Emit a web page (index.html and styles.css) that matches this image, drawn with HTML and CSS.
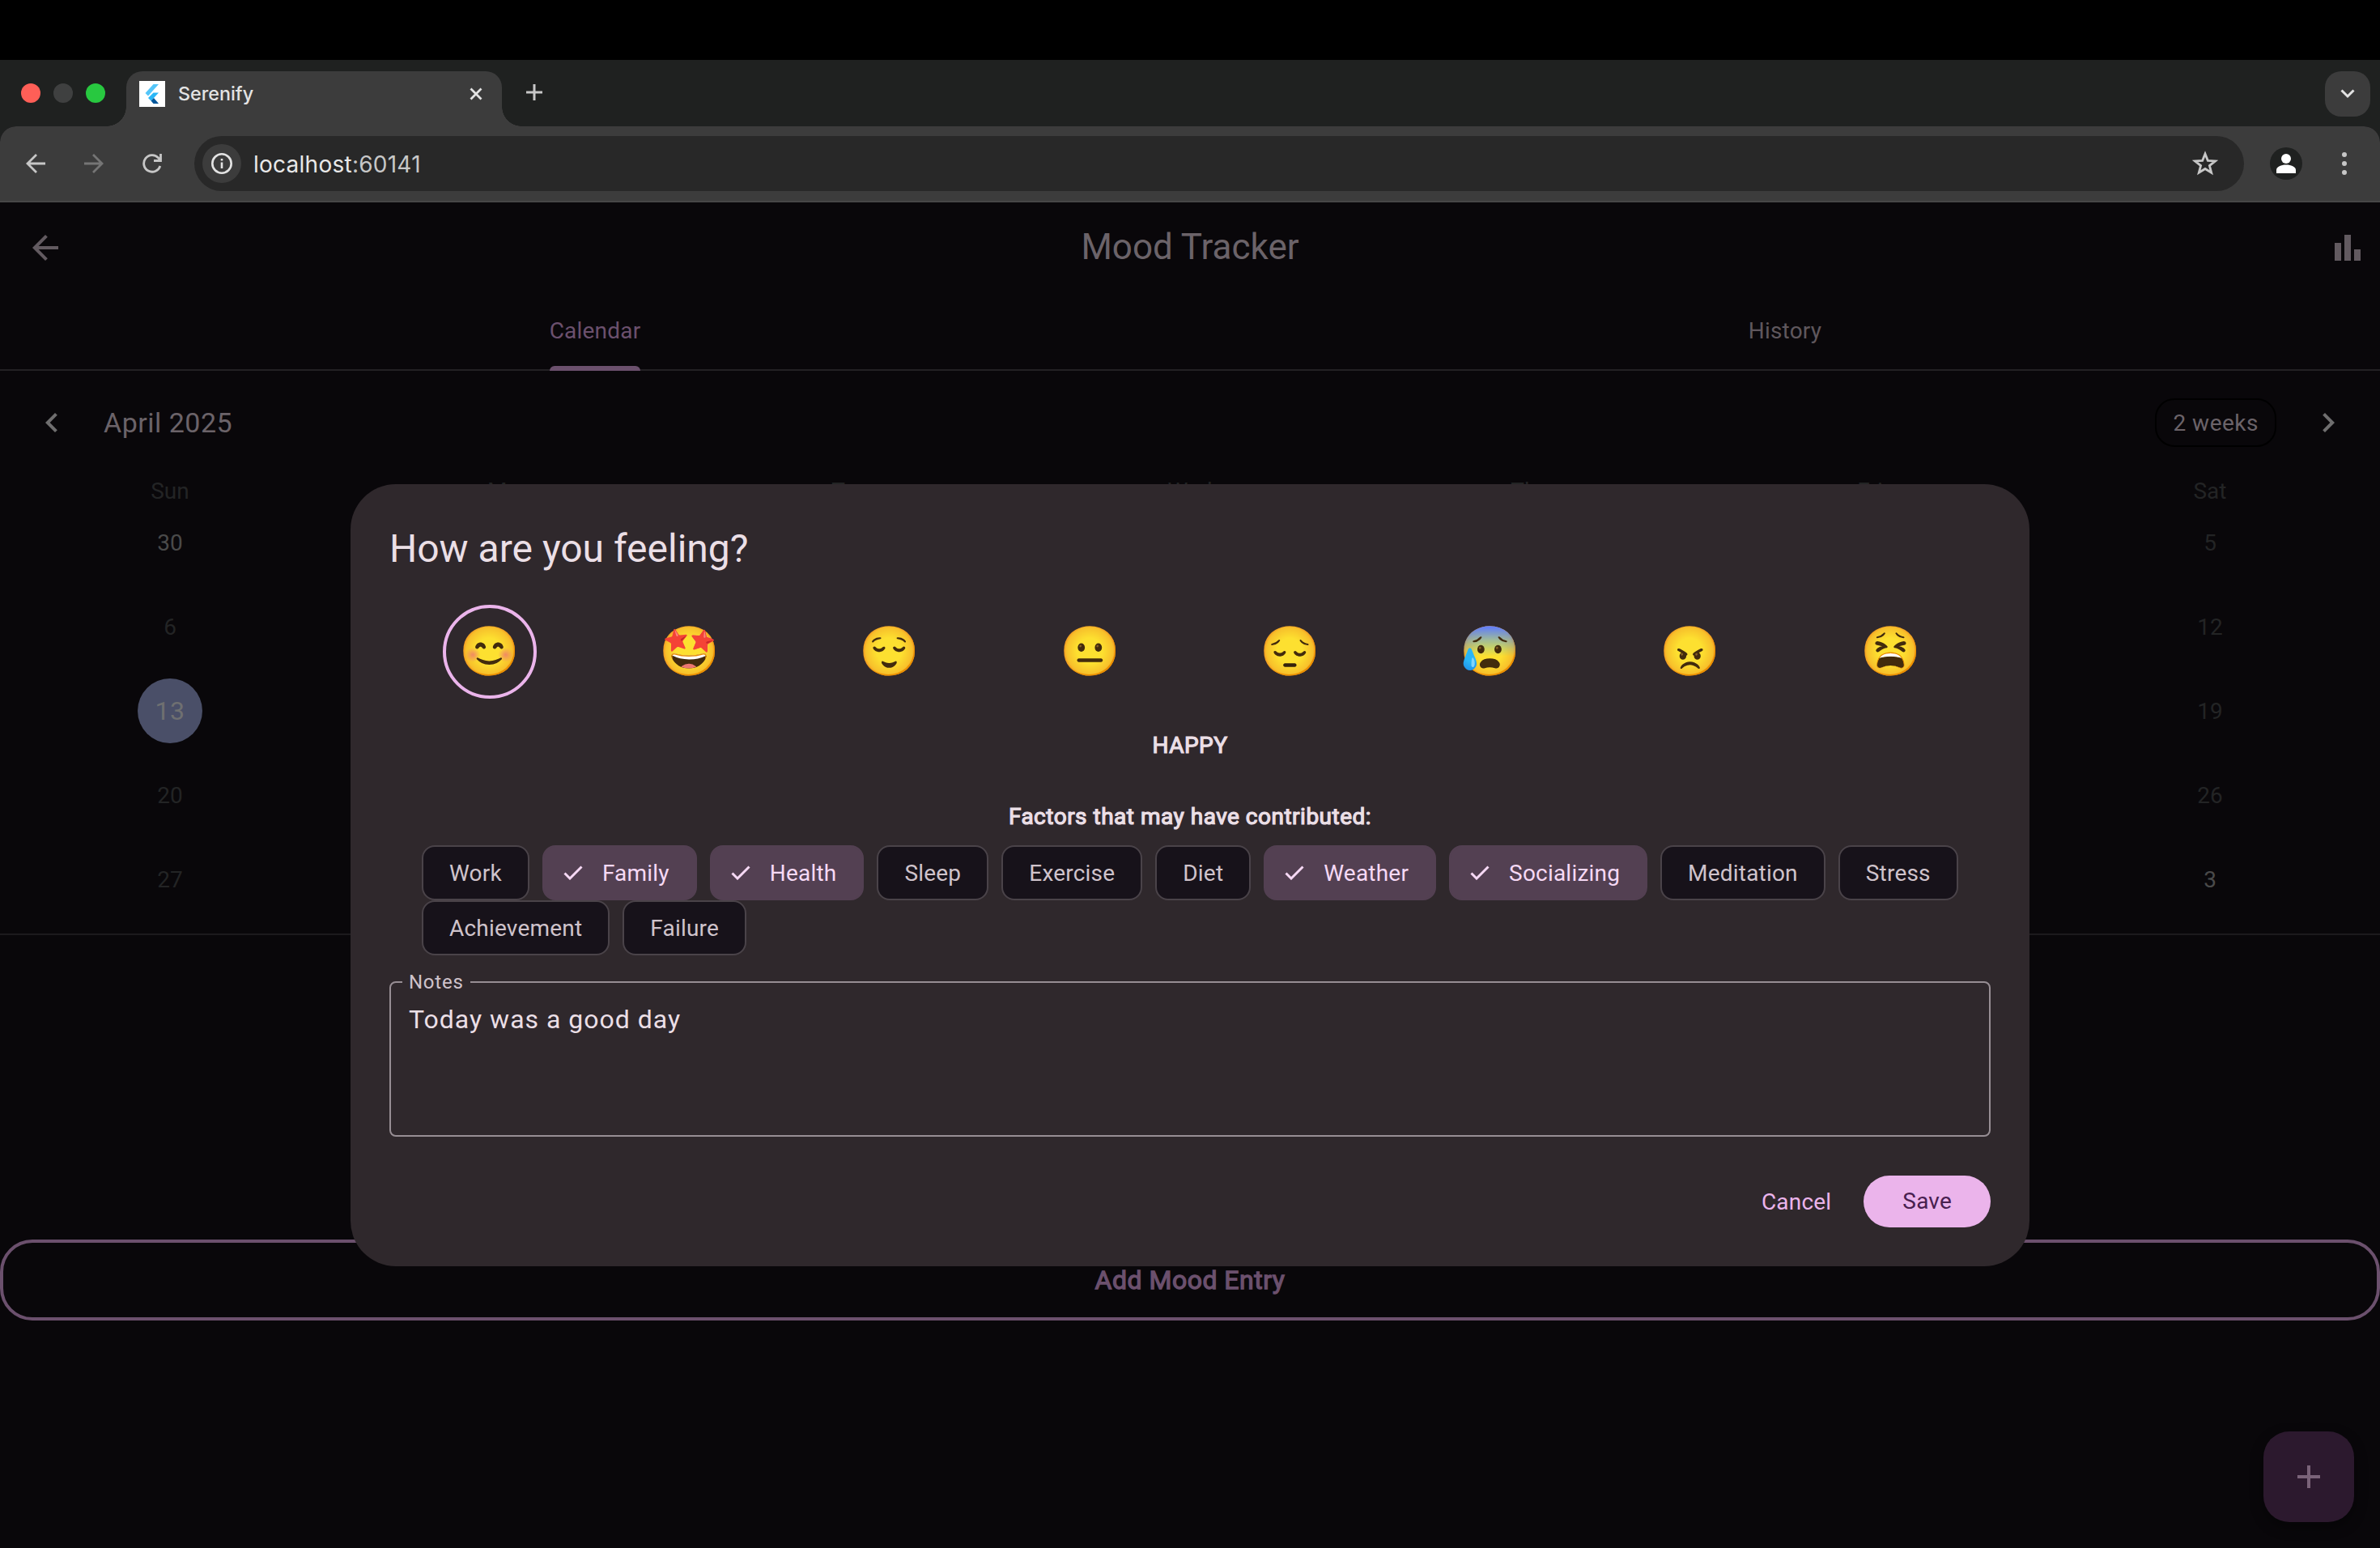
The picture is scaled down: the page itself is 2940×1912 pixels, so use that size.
FILE: index.html
```html
<!DOCTYPE html>
<html lang="en">
<head>
<meta charset="utf-8">
<title>Serenify</title>
<link rel="stylesheet" href="styles.css">
</head>
<body>
<div class="screen">
  <div class="menubar"></div>

  <div class="tabstrip">
    <div class="lights"><span class="light red"></span><span class="light gray"></span><span class="light green"></span></div>
    <div class="browser-tab">
      <svg class="favicon" viewBox="0 0 32 32"><rect width="32" height="32" fill="#fff"/><path d="M17.500 4h6.500L11 18.500 7.500 15z" fill="#54c5f8"/><path d="M17.500 14.500H24L18 21l-3.500 3.500L11 21z" fill="#29b6f6"/><path d="M14.500 24.500L18 21l6 7h-6.500z" fill="#01579b"/></svg>
      <span class="tab-name">Serenify</span>
      <svg class="tab-close" viewBox="0 0 16 16"><path d="M1.500 1.500l13 13M14.500 1.500l-13 13"/></svg>
    </div>
    <svg class="new-tab" viewBox="0 0 20 20"><path d="M10 0v20M0 10h20"/></svg>
    <div class="tab-search"><svg viewBox="0 0 18 12"><path d="M1.500 1.500L9 9l7.500-7.500"/></svg></div>
  </div>

  <div class="toolbar">
    <svg class="nav-icon" viewBox="0 0 24 24"><path d="M13 1L2 12l11 11M2 12h22"/></svg>
    <svg class="nav-icon dim" viewBox="0 0 24 24"><path d="M11 1l11 11-11 11M22 12H0"/></svg>
    <svg class="nav-icon" viewBox="0 0 24 24"><path d="M21.800 15A10.300 10.300 0 1 1 19.600 5L22 7.500M22.500 0v8.500H14"/></svg>
    <div class="address">
      <div class="site-info"><svg viewBox="0 0 26 26"><circle cx="13" cy="13" r="11.700"/><path d="M13 11.500v7.500M13 7v2.600"/></svg></div>
      <div class="url"><b>localhost</b>:60141</div>
      <svg class="star" viewBox="0 0 32 32"><path d="M16 4l3.300 8.300 9.200.6-7.100 5.700 2.300 8.700L16 22.500l-7.700 4.800 2.300-8.700-7.100-5.700 9.200-.6z"/></svg>
    </div>
    <svg class="profile" viewBox="0 0 40 40"><circle cx="20" cy="20" r="20" fill="#1f2120"/><circle cx="20" cy="14" r="6" fill="#fff"/><path d="M8 32v-4c0-4 6-6.500 12-6.500S32 24 32 28v4z" fill="#fff"/></svg>
    <svg class="kebab" viewBox="0 0 8 30"><circle cx="4" cy="4" r="3"/><circle cx="4" cy="15" r="3"/><circle cx="4" cy="26" r="3"/></svg>
  </div>

  <main class="app">
    <header class="appbar">
      <svg class="appbar-icon" viewBox="0 0 24 24"><path d="M20 11H7.830l5.590-5.590L12 4l-8 8 8 8 1.410-1.410L7.830 13H20z"/></svg>
      <h1>Mood Tracker</h1>
      <svg class="appbar-icon" viewBox="0 0 24 24"><path d="M4 9h4v11H4zM10 4h4v16h-4zM16 13h4v7h-4z"/></svg>
    </header>

    <nav class="tabs">
      <div class="tab"><span class="tab-label active">Calendar</span></div>
      <div class="tab"><span class="tab-label">History</span></div>
    </nav>

    <section class="calendar">
      <div class="cal-head">
        <svg class="chev" viewBox="0 0 24 24"><path d="M15.410 7.410L14 6l-6 6 6 6 1.410-1.410L10.830 12z"/></svg>
        <span class="month">April 2025</span>
        <span class="format">2 weeks</span>
        <svg class="chev" viewBox="0 0 24 24"><path d="M10 6L8.590 7.410 13.170 12l-4.580 4.590L10 18l6-6z"/></svg>
      </div>
      <div class="weekdays"><span>Sun</span><span>Mon</span><span>Tue</span><span>Wed</span><span>Thu</span><span>Fri</span><span>Sat</span></div>
      <div class="days">
        <span class="near">30</span><span></span><span></span><span></span><span></span><span></span><span>5</span>
        <span>6</span><span></span><span></span><span></span><span></span><span></span><span>12</span>
        <span><i class="today">13</i></span><span></span><span></span><span></span><span></span><span></span><span>19</span>
        <span>20</span><span></span><span></span><span></span><span></span><span></span><span>26</span>
        <span>27</span><span></span><span></span><span></span><span></span><span></span><span class="near">3</span>
      </div>
    </section>

    <button class="add-entry">Add Mood Entry</button>
  </main>

  <div class="fab"><svg viewBox="0 0 28 28"><path d="M14 0v28M0 14h28"/></svg></div>

  <div class="dialog">
    <h2>How are you feeling?</h2>
    <div class="moods">
      <div class="mood selected"><span>😊</span></div>
      <div class="mood"><span>🤩</span></div>
      <div class="mood"><span>😌</span></div>
      <div class="mood"><span>😐</span></div>
      <div class="mood"><span>😔</span></div>
      <div class="mood"><span>😰</span></div>
      <div class="mood"><span>😠</span></div>
      <div class="mood"><span>😫</span></div>
    </div>
    <div class="mood-name">HAPPY</div>
    <div class="factors-title">Factors that may have contributed:</div>
    <div class="chips">
      <span class="chip">Work</span>
      <span class="chip on"><svg viewBox="0 0 24 18"><path d="M1.500 9.500l6.500 6.500L22.500 1.500"/></svg>Family</span>
      <span class="chip on"><svg viewBox="0 0 24 18"><path d="M1.500 9.500l6.500 6.500L22.500 1.500"/></svg>Health</span>
      <span class="chip">Sleep</span>
      <span class="chip">Exercise</span>
      <span class="chip">Diet</span>
      <span class="chip on"><svg viewBox="0 0 24 18"><path d="M1.500 9.500l6.500 6.500L22.500 1.500"/></svg>Weather</span>
      <span class="chip on"><svg viewBox="0 0 24 18"><path d="M1.500 9.500l6.500 6.500L22.500 1.500"/></svg>Socializing</span>
      <span class="chip">Meditation</span>
      <span class="chip">Stress</span>
      <span class="chip">Achievement</span>
      <span class="chip">Failure</span>
    </div>
    <fieldset class="notes">
      <legend>Notes</legend>
      <div class="notes-text">Today was a good day</div>
    </fieldset>
    <div class="actions">
      <span class="cancel">Cancel</span>
      <span class="save">Save</span>
    </div>
  </div>
</div>
</body>
</html>
```
FILE: styles.css
```css
* { box-sizing: border-box; }
body { margin: 0; background: #09070a; }
.screen {
  position: relative;
  width: 2940px;
  height: 1912px;
  overflow: hidden;
  background: #09070a;
  font-family: Roboto, "Liberation Sans", sans-serif;
  font-size: 28px;
}
svg { display: block; flex: none; }

/* browser chrome */
.menubar { height: 74px; background: #000; }
.tabstrip {
  display: flex;
  align-items: center;
  height: 82px;
  padding: 0 12px 0 26px;
  background: #1f2120;
}
.lights { display: flex; gap: 16px; width: 130px; }
.light { width: 24px; height: 24px; border-radius: 50%; }
.red { background: #ff5f57; }
.gray { background: #3f4040; }
.green { background: #28c840; }
.browser-tab {
  position: relative;
  align-self: flex-end;
  display: flex;
  align-items: center;
  width: 464px;
  height: 68px;
  padding: 0 24px 12px 16px;
  border-radius: 20px 20px 0 0;
  background: #3c3c3c;
}
.browser-tab::before, .browser-tab::after {
  content: "";
  position: absolute;
  bottom: 0;
  width: 24px;
  height: 24px;
}
.browser-tab::before { left: -24px; background: radial-gradient(circle at 0 0, #1f2120 23.5px, #3c3c3c 24px); }
.browser-tab::after { right: -24px; background: radial-gradient(circle at 100% 0, #1f2120 23.5px, #3c3c3c 24px); }
.favicon { width: 32px; height: 32px; }
.tab-name { flex: 1; margin-left: 16px; font: 500 23.3px/32px Inter, sans-serif; color: #e3e3e3; }
.tab-close { width: 16px; height: 16px; stroke: #e3e3e3; stroke-width: 2.800; }
.new-tab { width: 20px; height: 20px; margin: 0 auto 2px 30px; stroke: #c7c7c7; stroke-width: 3; }
.tab-search {
  display: flex;
  align-items: center;
  justify-content: center;
  width: 56px;
  height: 56px;
  margin-top: 2px;
  border-radius: 20px;
  background: #3c3c3c;
}
.tab-search svg { width: 18px; height: 12px; fill: none; stroke: #e3e3e3; stroke-width: 3; }
.toolbar {
  display: flex;
  align-items: center;
  height: 94px;
  padding: 0 40px 0 32px;
  background: linear-gradient(#3c3c3c, #3c3c3c) padding-box;
  border-bottom: 2px solid #474747;
  border-radius: 20px 20px 0 0;
  box-shadow: 0 -20px 0 0 #1f2120;
  clip-path: inset(0);
}
.nav-icon { width: 24px; height: 24px; margin-right: 48px; fill: none; stroke: #c7c7c7; stroke-width: 2.800; }
.nav-icon.dim { stroke: #757575; }
.nav-icon:nth-child(3) { margin-right: 40px; }
.address {
  display: flex;
  align-items: center;
  width: 2532px;
  height: 68px;
  padding: 0 32px 0 10px;
  border-radius: 34px;
  background: #282828;
}
.site-info {
  display: flex;
  align-items: center;
  justify-content: center;
  width: 48px;
  height: 48px;
  border-radius: 50%;
  background: #3c3c3c;
}
.site-info svg { width: 26px; height: 26px; fill: none; stroke: #e3e3e3; stroke-width: 2.600; }
.url { flex: 1; margin: 1px 0 0 15px; font: 400 28px/36px Inter, sans-serif; letter-spacing: .25px; color: #c7c7c7; }
.url b { font-weight: 400; color: #e8e8e8; }
.star { width: 32px; height: 32px; fill: none; stroke: #c7c7c7; stroke-width: 2.800; }
.profile { width: 40px; height: 40px; margin-left: 32px; }
.kebab { width: 8px; height: 30px; margin-left: 48px; fill: #c7c7c7; }

/* app page */
.appbar {
  display: flex;
  align-items: center;
  justify-content: space-between;
  height: 112px;
  padding: 0 16px 0 32px;
}
.appbar-icon { width: 48px; height: 48px; fill: #625a60; }
h1 { margin: 0 0 2px -16px; font-size: 44px; font-weight: 400; line-height: 56px; color: #6b6369; }
.tabs { display: flex; height: 96px; border-bottom: 2px solid #232124; }
.tab { flex: 1; display: flex; justify-content: center; }
.tab-label {
  height: 96px;
  line-height: 93px;
  letter-spacing: .2px;
  color: #5f575d;
}
.tab-label.active { color: #6b506d; }
.tab-label.active::after {
  content: "";
  display: block;
  height: 6px;
  margin-top: -3px;
  border-radius: 6px 6px 0 0;
  background: #6b506d;
}
.cal-head {
  display: flex;
  align-items: center;
  height: 128px;
  padding: 0 40px;
}
.chev { width: 48px; height: 48px; fill: #6f6e6f; }
.month { flex: 1; margin-left: 40px; font-size: 34px; line-height: 40px; letter-spacing: .5px; color: #6b6369; }
.format {
  height: 60px;
  padding: 0 20px;
  margin-right: 40px;
  border: 2px solid #000;
  border-radius: 24px;
  line-height: 58px;
  letter-spacing: .5px;
  color: #6b6369;
}
.weekdays, .days { display: grid; grid-template-columns: repeat(7, 420px); text-align: center; color: #232425; }
.weekdays { height: 32px; margin-top: 5px; line-height: 32px; }
.days { grid-auto-rows: 104px; line-height: 104px; margin-top: -4px; height: 536px; border-bottom: 2px solid #1c1a1d; }
.days span { display: flex; align-items: center; justify-content: center; }
.days .near { color: #4a4a4a; }
.today {
  width: 80px;
  height: 80px;
  margin-top: -2px;
  border-radius: 50%;
  background: #4a4f68;
  font-size: 32px;
  font-style: normal;
  line-height: 80px;
  letter-spacing: .5px;
  color: #6f7071;
}
.add-entry {
  display: block;
  width: 2940px;
  height: 100px;
  margin-top: 376px;
  padding: 0;
  border: 4px solid #6b506d;
  border-radius: 40px;
  background: none;
  font: 400 32px/92px Roboto, sans-serif;
  letter-spacing: .5px;
  color: #6b506d;
  -webkit-text-stroke: 1.3px #6b506d;
}
.fab {
  position: absolute;
  left: 2796px;
  top: 1768px;
  display: flex;
  align-items: center;
  justify-content: center;
  width: 112px;
  height: 112px;
  border-radius: 32px;
  background: #2c192e;
  box-shadow: 0 6px 16px rgba(0, 0, 0, .4);
}
.fab svg { width: 28px; height: 28px; stroke: #7a6379; stroke-width: 4; }

/* mood dialog */
.dialog {
  position: absolute;
  left: 433px;
  top: 598px;
  width: 2074px;
  height: 966px;
  padding: 48px;
  border-radius: 56px;
  background: #2f282c;
  color: #ebdfe6;
}
h2 { margin: 0; font-size: 48px; font-weight: 400; line-height: 64px; }
.moods { display: grid; grid-template-columns: repeat(8, 1fr); margin-top: 37px; }
.mood {
  display: flex;
  align-items: center;
  justify-content: center;
  justify-self: center;
  width: 116px;
  height: 116px;
  border: 4px solid transparent;
  border-radius: 50%;
  font: 60px/66px "Noto Color Emoji", sans-serif;
}
.mood.selected { border-color: #ebb4eb; }
.mood-name, .factors-title { text-align: center; line-height: 40px; letter-spacing: .5px; -webkit-text-stroke: 1.2px #ebdfe6; }
.mood-name { margin-top: 38px; }
.factors-title { margin-top: 48px; }
.chips {
  display: flex;
  flex-wrap: wrap;
  column-gap: 16px;
  width: 1900px;
  margin: 15px 0 0 40px;
}
.chip {
  display: flex;
  align-items: center;
  height: 68px;
  padding: 0 32px;
  border: 2px solid #4a4349;
  border-radius: 16px;
  background: #17121a;
  letter-spacing: .2px;
  color: #cfc3cb;
}
.chip.on { padding-left: 24px; border-color: #534052; background: #534052; color: #f6d9f5; }
.chip svg { width: 24px; height: 18px; margin-right: 24px; fill: none; stroke: #f6d9f5; stroke-width: 3; }
.notes {
  height: 204px;
  margin: 20px 0 0;
  padding: 0 22px;
  border: 2px solid #978e94;
  border-radius: 8px;
}
.notes legend {
  margin-left: -8px;
  padding: 0 8px;
  font-size: 24px;
  line-height: 26px;
  letter-spacing: .75px;
  color: #cfc3cb;
}
.notes-text { margin-top: 13px; font-size: 32px; line-height: 40px; letter-spacing: 1px; }
.actions { display: flex; justify-content: flex-end; align-items: center; margin-top: 48px; }
.cancel { margin-right: 40px; letter-spacing: .2px; color: #ebb4eb; }
.save {
  height: 64px;
  padding: 0 48px;
  border-radius: 32px;
  background: #ebb4eb;
  line-height: 64px;
  letter-spacing: .2px;
  color: #48204f;
}
```
